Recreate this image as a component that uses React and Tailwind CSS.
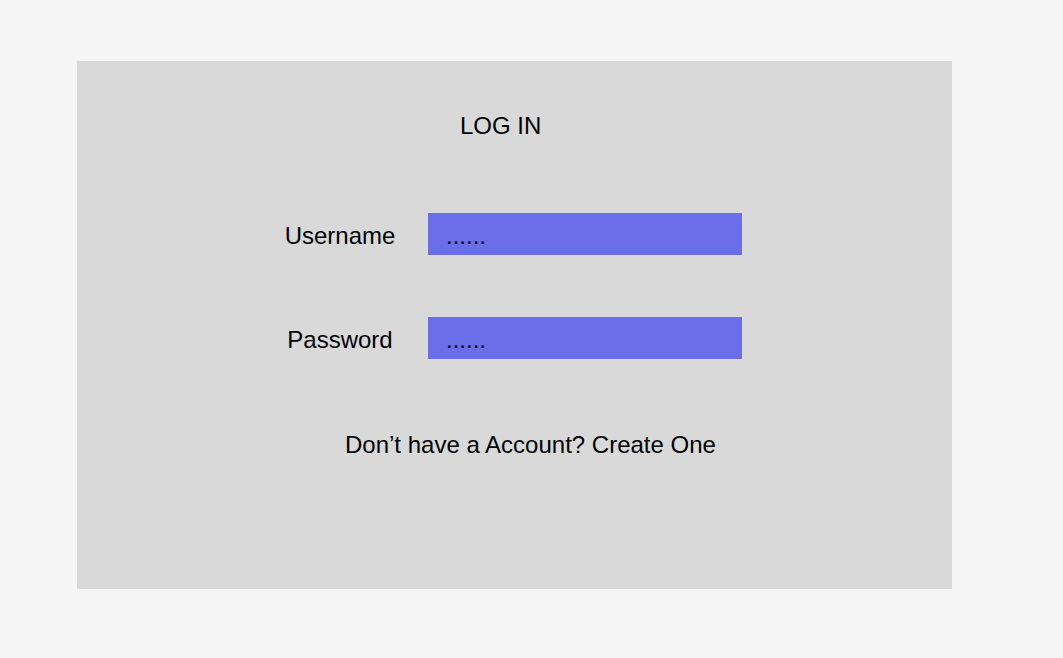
export default function App() {
  return (
    <div
      className="min-h-screen w-full bg-[#f5f5f5] pt-[61px] pl-[77px]"
      style={{ fontFamily: '"Liberation Sans", Arial, sans-serif' }}
    >
      <div className="w-[875px] h-[528px] bg-[#d9d9d9] flex flex-col items-start pt-[51px] text-black">
        <h1 className="ml-[383px] text-[24px] leading-[28px] font-normal">LOG IN</h1>

        <div className="mt-[73px] ml-[193px] flex items-center">
          <label className="w-[140px] pt-[3px] text-center text-[24px] leading-[28px]">Username</label>
          <div className="ml-[18px] w-[314px] h-[42px] bg-[#6a6ee8] flex items-center pl-[18px] pt-[3px] text-[24px] leading-[28px]">
            ......
          </div>
        </div>

        <div className="mt-[62px] ml-[193px] flex items-center">
          <label className="w-[140px] pt-[3px] text-center text-[24px] leading-[28px]">Password</label>
          <div className="ml-[18px] w-[314px] h-[42px] bg-[#6a6ee8] flex items-center pl-[18px] pt-[3px] text-[24px] leading-[28px]">
            ......
          </div>
        </div>

        <p className="mt-[72px] ml-[268px] text-[24px] leading-[28px]">
          Don’t have a Account? Create One
        </p>
      </div>
    </div>
  );
}
